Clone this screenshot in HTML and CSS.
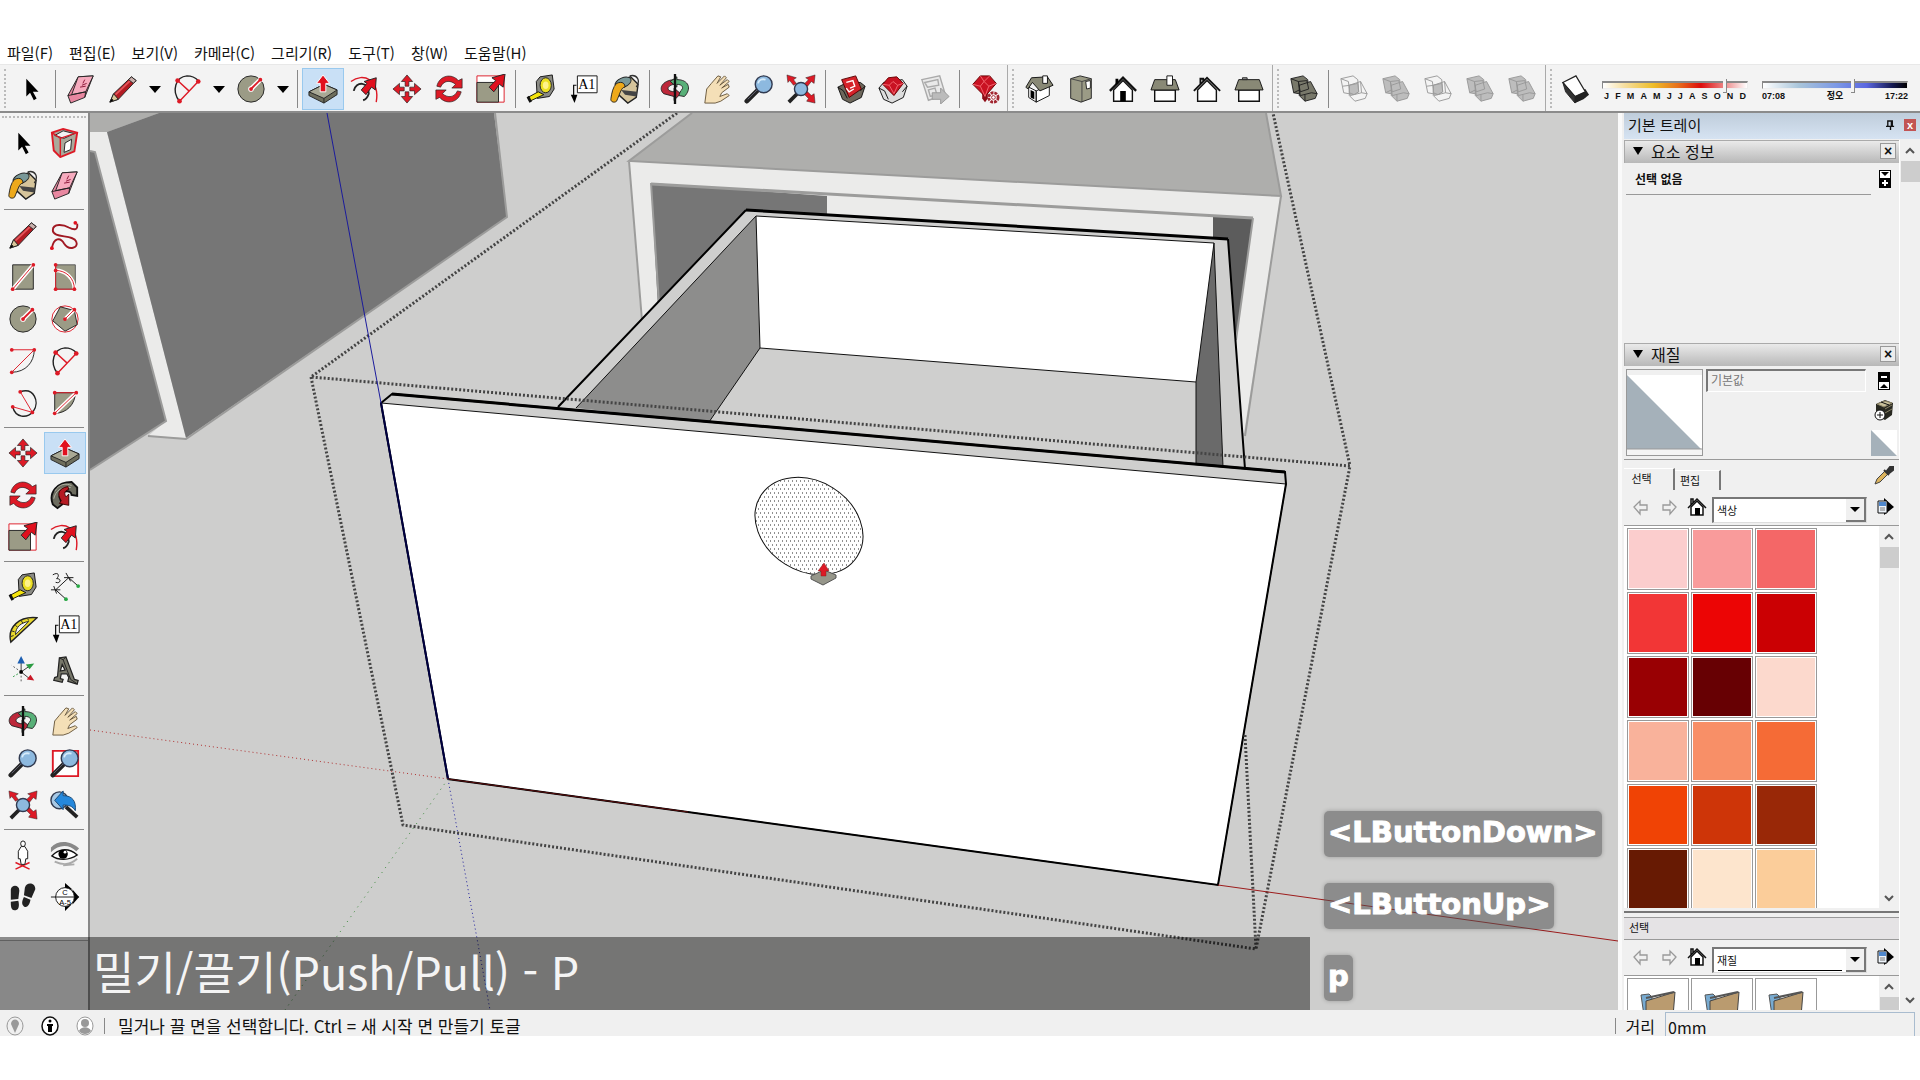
FILE: index.html
```html
<!DOCTYPE html>
<html lang="ko">
<head>
<meta charset="UTF-8">
<meta name="viewport" content="width=device-width, initial-scale=1.0">
<title>SketchUp</title>
<link rel="stylesheet" href="styles.css">
</head>
<body>
<!-- Icon definitions -->
<svg class="defs" width="0" height="0">
    <defs>
        <symbol id="select" viewBox="0 0 32 32"><path d="M11 5v19l4-4 4 8 3-2-4-7h6z"/></symbol>
        <symbol id="eraser" viewBox="0 0 32 32"><path d="M13 3l16-1-9 23-15 6-3-8z" fill="#e887a0" stroke="#222"/><path d="M13 3l16-1-8 17-15 3z" fill="#f6abbe" stroke="#222"/><path d="M2 23l5-1 14-3M21 19l-1 6" fill="none" stroke="#222"/><path d="M20 6l-2 4m4 0l-5 2m4 1l-6 1" stroke="#813" fill="none"/></symbol>
        <symbol id="pencil" viewBox="0 0 32 32"><path d="M2 30l4-9L25 3l5 4L11 27z" fill="#b31b22" stroke="#222"/><path d="M8 22L26 5" stroke="#e2555a" stroke-width="2"/><path d="M2 30l4-9 5 6z" fill="#d9c79b" stroke="#222"/><path d="M2 30l2-4 2 2z"/><path d="M22 6l5 4 3-3-5-4z" fill="#c9b0ac" stroke="#222"/></symbol>
        <symbol id="freehand" viewBox="0 0 32 32"><path d="M2 30c2-11 9-12 13-5 5 8 16 5 13-2C25 15 3 20 3 11c0-8 12-6 17-3 6 3 10 3 9-4" fill="none" stroke="#a01822" stroke-width="2"/><circle cx="2" cy="30" r="2" fill="#e1101e"/><circle cx="27" cy="3" r="2" fill="#e1101e"/></symbol>
        <symbol id="rect" viewBox="0 0 32 32"><path d="M5 3h22v26H5z" fill="#9b9b86" stroke="#222"/><path d="M5 29L27 3" stroke="#fff" stroke-width="4"/><path d="M5 29L27 3" stroke="#dd1a26"/><circle cx="5" cy="29" r="2" fill="#dd1a26"/><circle cx="27" cy="3" r="2" fill="#dd1a26"/></symbol>
        <symbol id="rotrect" viewBox="0 0 32 32"><path d="M6 3h21v26H6z" fill="#9b9b86" stroke="#555"/><path d="M6 9c10 0 20 8 20 20" fill="none" stroke="#fff" stroke-width="4"/><path d="M6 3v26h20C26 17 17 9 6 9" fill="none" stroke="#dd1a26"/><g fill="#dd1a26"><circle cx="6" cy="3" r="2"/><circle cx="6" cy="9" r="2"/><circle cx="6" cy="29" r="2"/><circle cx="26" cy="29" r="2"/></g></symbol>
        <symbol id="circle" viewBox="0 0 32 32"><circle cx="16" cy="16" r="14" fill="#9b9b86" stroke="#222"/><path d="M16 16L26 6" stroke="#fff" stroke-width="5"/><circle cx="16" cy="16" r="3" fill="#fff"/><path d="M16 16L26 6" stroke="#dd1a26" stroke-width="2"/><circle cx="16" cy="16" r="2" fill="#dd1a26"/><circle cx="26" cy="6" r="2" fill="#dd1a26"/></symbol>
        <symbol id="polygon" viewBox="0 0 32 32"><circle cx="16" cy="16" r="14" fill="#fff" stroke="#dd1a26"/><path d="M11 3l15 4 3 15-13 7L3 18z" fill="#9b9b86" stroke="#222"/><path d="M16 16L26 6" stroke="#fff" stroke-width="4"/><path d="M16 16L26 6" stroke="#dd1a26"/><circle cx="16" cy="16" r="2" fill="#dd1a26"/><circle cx="26" cy="6" r="2" fill="#dd1a26"/></symbol>
        <symbol id="arc" viewBox="0 0 32 32"><path d="M28 4c0 13-9 24-24 24" fill="none" stroke="#222"/><path d="M4 4h24L4 28" fill="none" stroke="#dd1a26"/><g fill="#dd1a26"><circle cx="4" cy="4" r="2"/><circle cx="28" cy="4" r="2"/><circle cx="4" cy="28" r="2"/></g></symbol>
        <symbol id="arc2" viewBox="0 0 32 32"><path d="M8 29C-1 18 4 3 16 2c5 0 9 2 12 5" fill="none" stroke="#222" stroke-width="1.5"/><path d="M8 29L28 8M6 7l12 11" stroke="#dd1a26" stroke-width="1.5"/><g fill="#dd1a26"><circle cx="8" cy="29" r="2.5"/><circle cx="28" cy="8" r="2.5"/><circle cx="6" cy="7" r="2.5"/></g></symbol>
        <symbol id="arc3" viewBox="0 0 32 32"><path d="M13 4c15-5 21 11 14 21-7 8-19 7-22-5" fill="none" stroke="#222" stroke-width="1.5"/><path d="M13 4l13 22L5 20" fill="none" stroke="#dd1a26"/><g fill="#dd1a26"><circle cx="13" cy="4" r="2"/><circle cx="26" cy="26" r="2"/><circle cx="5" cy="20" r="2"/></g></symbol>
        <symbol id="pie" viewBox="0 0 32 32"><path d="M5 5h22c0 12-9 22-22 22z" fill="#9b9b86" stroke="#222"/><path d="M5 27L28 5" stroke="#fff" stroke-width="4"/><path d="M5 27L28 5H5" fill="none" stroke="#dd1a26"/><g fill="#dd1a26"><circle cx="5" cy="5" r="2"/><circle cx="28" cy="5" r="2"/><circle cx="5" cy="27" r="2"/></g></symbol>
        <symbol id="pushpull" viewBox="0 0 32 32"><path d="M1 19l16-8 14 6v5l-14 9-16-8z" fill="#6e6e5d" stroke="#222"/><path d="M1 19l16-8 14 6-14 9z" fill="#a9a995" stroke="#222"/><path d="M17 26v5" stroke="#222"/><path d="M13 19V10H9l7-9 7 9h-4v9z" fill="#e1101e" stroke="#fff"/></symbol>
        <symbol id="offset" viewBox="0 0 32 32"><path d="M1 8C14-2 32 6 28 30" fill="none" stroke="#dd1a26" stroke-width="1.5"/><path d="M4 18c2-11 17-10 16 3-1 3-3 6-6 7" fill="none" stroke="#222" stroke-width="2"/><path d="M12 17l6-7-3-2 13-4-1 13-4-3-6 8z" fill="#e1101e" stroke="#222"/></symbol>
        <symbol id="move" viewBox="0 0 32 32"><g fill="#dd1a26" stroke="#222" stroke-width=".7"><path d="M16 1l6 7h-4v5h-4V8h-4z"/><path d="M16 31l6-7h-4v-5h-4v5h-4z"/><path d="M1 16l7-6v4h5v4H8v4z"/><path d="M31 16l-7-6v4h-5v4h5v4z"/></g></symbol>
        <symbol id="rotate" viewBox="0 0 32 32"><g fill="#dd1a26" stroke="#222" stroke-width=".7"><path d="M3 13C6 1 19-1 26 7l4-2v10H19l4-4C17 6 10 7 7 14z"/><path d="M29 19c-3 12-16 14-23 6l-4 2V17h11l-4 4c6 5 13 4 16-3z"/></g></symbol>
        <symbol id="scale" viewBox="0 0 32 32"><path d="M1 2h29v28H1z" fill="#fff" stroke="#dd1a26"/><path d="M1 9h23v21H1z" fill="#9b9b86" stroke="#222"/><path d="M14 14l7-7-4-3 14-4-2 14-4-3-6 8z" fill="#e1101e" stroke="#222"/></symbol>
        <symbol id="follow" viewBox="0 0 32 32"><path d="M3 26C-2 13 8 2 23 2l6 6v9l-6-1c0-6-11-5-13 2l3 8-5 4z" fill="#6c6c5f" stroke="#111" stroke-width="2"/><path d="M5 12c5-8 12-9 18-6M4 20c2-8 7-13 18-12" stroke="#b5b5a6" fill="none"/><path d="M19 7c-10 2-12 8-7 15l-2 3 10 2V15l-3 3c-2-4-2-6 3-8z" fill="#b51a22" stroke="#300"/></symbol>
        <symbol id="tape" viewBox="0 0 32 32"><path d="M11 8l4-5 13-2 2 15-5 8-13 2z" fill="#8b8b85" stroke="#111"/><ellipse cx="21" cy="12" rx="6" ry="8" fill="#ecdf23" stroke="#222"/><ellipse cx="21" cy="12" rx="3" ry="4" fill="#fff28a"/><path d="M13 19l6 3-15 7-2-4z" fill="#f4e40b" stroke="#111"/><path d="M2 24l3 6" stroke="#111" stroke-width="3"/></symbol>
        <symbol id="text" viewBox="0 0 32 32"><path d="M10 2h21v18H10z" fill="#fff" stroke="#111"/><path d="M9 12H6v13" fill="none" stroke="#111" stroke-width="1.3"/><path d="M3 22h7l-3 9z"/><text x="20" y="16" class="glyph">A1</text></symbol>
        <symbol id="paint" viewBox="0 0 32 32"><path d="M8 8l14-5 8 8-2 14-9 6-10-9z" fill="#d5c49b" stroke="#222" stroke-width="1.5"/><path d="M12 17l17 2-1 5-12-2z" fill="#444"/><path d="M21 2c8-2 12 5 7 12" fill="none" stroke="#333" stroke-width="1.4"/><ellipse cx="14" cy="9" rx="9" ry="5" transform="rotate(-22 14 9)" fill="#799898" stroke="#222"/><path d="M7 10c7-3 9 1 9 4-4 0-5 6-9 15-2 2-7 1-6-3 1-6 2-12 6-16z" fill="#eda91b" stroke="#222"/></symbol>
        <symbol id="component" viewBox="0 0 32 32"><path d="M2 5l12-4 15 4-3 20-15 6L4 24z" fill="#aaa99b" stroke="#dd1a26" stroke-width="2"/><path d="M5 8l9-5 12 3-11 5z" fill="#f2f2f2" stroke="#222"/><path d="M16 16l7-4-1 11-7 3z" fill="#fff" stroke="#222"/><path d="M2 5l9 6 18-6M11 11v20" stroke="#dd1a26" stroke-width="1.5" fill="none"/></symbol>
        <symbol id="dim" viewBox="0 0 32 32"><path d="M6 19L20 6M6 19l11 10M20 6l10 9M4 15l3 8M1 19h10M15 6h10M17 1l5 9" stroke="#111" fill="none"/><circle cx="17" cy="29" r="2" fill="#27a743"/><circle cx="30" cy="15" r="2" fill="#27a743"/><path d="M3 3c7-4 7 2 4 4 6 0 4 6-1 4" stroke="#111" fill="none"/></symbol>
        <symbol id="protractor" viewBox="0 0 32 32"><path d="M3 30C-1 14 12 2 31 4z" fill="#e8d82c" stroke="#222" stroke-width="1.5"/><path d="M8 22C8 14 14 9 22 8z" fill="#f4f4f4" stroke="#222"/><path d="M3 24l3-1M4 18l3 1M8 12l2 2m4-7l2 3m5-5l1 2" stroke="#222"/></symbol>
        <symbol id="axes" viewBox="0 0 32 32"><path d="M14 17v12M14 17L4 10" stroke="#555" stroke-dasharray="2 2"/><path d="M14 17L4 23" stroke="#2b9c42" stroke-dasharray="2 2"/><path d="M14 17V6m0 11l10-7M14 17l10 8" stroke="#333"/><path d="M14 0l4 8h-8z" fill="#1c5eb2"/><path d="M28 8l-9 1 4 5z" fill="#2b9c42"/><path d="M28 26l-8-1 4-5z" fill="#c91826"/><circle cx="14" cy="17" r="2"/></symbol>
        <symbol id="text3d" viewBox="0 0 32 32"><path fill-rule="evenodd" d="M10 2l7-1 9 24 4 1-1 4-10-3 1-4-2-4h-6l-1 5 3 1-1 3-9-2 1-3 3-1zM13 9l-2 7 5-1z" fill="#77776a" stroke="#222" stroke-width="1.3"/><path d="M10 2l4 2 8 21 6 4M14 4l3-3" fill="none" stroke="#222"/></symbol>
        <symbol id="orbit" viewBox="0 0 32 32"><path d="M15 6C2 7-2 16 4 21l11 3v4l7-7-7-6v4C5 18 8 12 15 11z" fill="#bd283a" stroke="#222"/><path d="M18 6c13 0 16 10 8 18l-6-1 2-5c4-3 2-7-4-7v3l-7-6 7-5z" fill="#58b078" stroke="#222"/><path d="M16 0v32" stroke="#111" stroke-width="2.5"/></symbol>
        <symbol id="hand" viewBox="0 0 32 32"><path d="M3 31l2-15 5-6L17 2l3 1-4 7 8-8 2 2-7 8 8-6 2 2-8 7 7-4 1 3-8 6-2 4 8-3 2 2-9 6-6 2z" fill="#f4dfb7" stroke="#67563b"/></symbol>
        <symbol id="zoom" viewBox="0 0 32 32"><path d="M3 29l12-12" stroke="#222" stroke-width="5" stroke-linecap="round"/><path d="M4 27l10-10" stroke="#667"/><circle cx="21" cy="11" r="9" fill="#8db9df" stroke="#313a50" stroke-width="1.5"/><path d="M15 10c1-4 4-5 8-4" stroke="#d6ebfa" stroke-width="2" fill="none"/></symbol>
        <symbol id="zoomwin" viewBox="0 0 32 32"><path d="M3 3h27v27H3z" fill="#fff" stroke="#dd1a26" stroke-width="2"/><use href="#zoom"/></symbol>
        <symbol id="extents" viewBox="0 0 32 32"><path d="M3 30l10-10" stroke="#222" stroke-width="4"/><circle cx="16" cy="16" r="7" fill="#8db9df" stroke="#313a50" stroke-width="1.5"/><g fill="#dd1a26" stroke="#222" stroke-width=".5"><path d="M1 1l10 3-3 2 3 4-3 2-4-5-2 2zM31 1L21 4l3 2-4 4 3 3 4-5 3 2zM31 31l-9-2 2-3-4-4 3-3 4 4 3-2z"/></g></symbol>
        <symbol id="previous" viewBox="0 0 32 32"><circle cx="10" cy="11" r="9" fill="#a6c8e5" stroke="#313a50" stroke-width="1.5"/><path d="M17 18l12 11" stroke="#222" stroke-width="4"/><path d="M5 11L14 1v5c10 0 14 6 13 16-3-5-7-6-13-6v5z" fill="#2588dc" stroke="#174673"/></symbol>
        <symbol id="camera" viewBox="0 0 32 32"><path d="M8 31l15-7M8 24l15 7" stroke="#dd1a26" stroke-width="1.5"/><path d="M14 7l-3 5v8h2l1 6h4l1-6h2v-8l-3-5z" fill="#fff" stroke="#111"/><ellipse cx="16" cy="4" rx="2.5" ry="3" fill="#fff" stroke="#111"/></symbol>
        <symbol id="look" viewBox="0 0 32 32"><path d="M1 8C9-1 23 1 31 9l-3 3C20 4 9 5 1 13z" fill="#888"/><path d="M2 17c7-8 18-9 27-1-9 6-20 6-27 1z" fill="#fff" stroke="#111" stroke-width="1.5"/><circle cx="14" cy="15" r="5"/><circle cx="16" cy="13" r="1.5" fill="#fff"/><path d="M5 23c9 4 16 4 24-3M14 27l12-1" stroke="#aaa" stroke-width="2" fill="none"/></symbol>
        <symbol id="walk" viewBox="0 0 32 32"><path d="M3 8C4 2 13 3 12 10l-1 8-8 1zM3 21l8-1c2 8-1 11-4 10-4 0-4-5-4-9zM18 6c2-7 12-5 11 2l-4 9-8-3zM17 16l7 3c-1 6-4 9-7 7-3-2-2-6 0-10z" fill="#222"/></symbol>
        <symbol id="section" viewBox="0 0 32 32"><path d="M16 1l8 7h-8zM31 16l-7 8V8zM16 31l7-7h-7z"/><circle cx="16" cy="16" r="10" fill="#fff" stroke="#111"/><path d="M1 16h30" stroke="#111"/><text x="16" y="14" class="tiny">C</text><text x="16" y="24" class="tiny">A-5</text></symbol>
        <symbol id="warehouse" viewBox="0 0 32 32"><path d="M2 14l6-3 18-2 5 4-4 12-12 6-8-4z" fill="#6d675b" stroke="#111"/><path d="M6 6l15-4 6 14-13 9z" fill="#d52229" stroke="#500"/><path d="M11 9l7-2 2 6-5 2m-4 0l3 4 5-3" fill="none" stroke="#fff" stroke-width="1.5"/><path d="M2 14l6 4 4 8M31 13l-5 5" stroke="#111" fill="none"/></symbol>
        <symbol id="gembox" viewBox="0 0 32 32"><path d="M1 15l5-6 20-3 5 7-4 12-12 6-9-4z" fill="#ddd" stroke="#111"/><path d="M1 15l6 3 4 9M31 13l-5 6" fill="none" stroke="#111"/><path d="M5 11l6-7 9-1 7 7-10 13z" fill="#c91222" stroke="#600"/><path d="M5 11l7 1 4-4 5 4 6-2M12 12l5 9 4-9" fill="none" stroke="#f36a72"/></symbol>
        <symbol id="gem" viewBox="0 0 32 32"><path d="M3 11l8-9h10l7 8-12 14z" fill="#c91222" stroke="#600"/><path d="M3 11l8 2 4-5 5 5 8-3M11 2l4 6 6-6M11 13l5 11 4-11" fill="none" stroke="#f36a72"/></symbol>
        <symbol id="layout" viewBox="0 0 32 32"><path d="M2 6l19-4 6 20-18 6z" fill="#e9e9e9" stroke="#aaa" stroke-width="1.5"/><path d="M5 9l14-3 1 6-12 2zM9 17l7-2 2 7-7 2z" fill="none" stroke="#aaa" stroke-width="1.5"/><path d="M13 20h9v-5l9 9-9 8v-5h-9z" fill="#bbb" stroke="#999"/></symbol>
        <symbol id="gemgear" viewBox="0 0 32 32"><path d="M13 14h6v12l-3 4-3-4z" fill="#8f0e18"/><use href="#gem"/><circle cx="25" cy="25" r="5" fill="#fff" stroke="#a22630" stroke-width="3" stroke-dasharray="3 1"/><circle cx="25" cy="25" r="2" fill="none" stroke="#a22630"/></symbol>
        <symbol id="iso" viewBox="0 0 32 32"><path d="M5 14l8 4v12l-8-5zM13 18l14-6v11l-14 7z" fill="#fff" stroke="#111"/><path d="M2 14L8 4l17-1 6 9-14 6-8-9-5 7z" fill="#898976" stroke="#111"/><path d="M20 2h5v8h-5z" fill="#fff" stroke="#111"/><path d="M7 17l4 2v8l-4-2z"/></symbol>
        <symbol id="top" viewBox="0 0 32 32"><path d="M5 5l10-3 12 3v21l-11 4-11-4z" fill="#9b9b86" stroke="#222"/><path d="M5 5l12 3 10-3M17 8v22" stroke="#444" fill="none"/><path d="M21 8l5-1v8l-4 1z" fill="#fff" stroke="#222"/></symbol>
        <symbol id="front" viewBox="0 0 32 32"><path d="M6 17L16 7l10 10v12H6z" fill="#fff" stroke="#111" stroke-width="1.5"/><path d="M2 18L16 4l14 14" fill="none" stroke="#111" stroke-width="2.5"/><path d="M13 18h6v11h-6zM8 5h3v5l-3 2z"/></symbol>
        <symbol id="right" viewBox="0 0 32 32"><path d="M5 17h22v12H5z" fill="#fff" stroke="#111" stroke-width="1.5"/><path d="M5 6h22l4 11H1z" fill="#898976" stroke="#111"/><path d="M18 2h6v10h-6z" fill="#fff" stroke="#111"/></symbol>
        <symbol id="back" viewBox="0 0 32 32"><path d="M6 17L16 7l10 10v12H6z" fill="#fff" stroke="#111" stroke-width="1.5"/><path d="M2 18L16 4l14 14M9 11V5h3v3" fill="none" stroke="#111" stroke-width="2"/></symbol>
        <symbol id="left" viewBox="0 0 32 32"><path d="M5 17h22v12H5z" fill="#fff" stroke="#111" stroke-width="1.5"/><path d="M5 6h22l4 11H1z" fill="#898976" stroke="#111"/><path d="M9 4h5v2H9z" fill="#999" stroke="#222"/></symbol>
        <symbol id="shell" viewBox="0 0 32 32"><path d="M2 5l13-3 5 4 1 13-5 3-11-2z"/><path d="M11 12l12-4 7 13-2 5-11 3-6-6z"/><path d="M10 8l9-1 2 9-9 3z" fill="none"/><path d="M2 5l8 3 2 15 12-3 6 1M5 20l6-3M17 29v-7" fill="none"/></symbol>
        <symbol id="wire" viewBox="0 0 32 32"><path d="M2 5l13-3 5 4 1 13-5 3-11-2zM11 12l12-4 7 13-2 5-11 3-6-6zM2 5l8 3 2 15 12-3 6 1M4 13l16-2M24 20l-1-12" fill="none"/><path d="M11 12l9-2 1 9-5 3-5-2z"/></symbol>
        <symbol id="shadow" viewBox="0 0 32 32"><path d="M17 19l10-3 4 6-6 5-9 4z" fill="#222"/><path d="M3 9l14-7 10 17-11 5z" fill="#fff" stroke="#222" stroke-width="1.3"/><path d="M3 9l13 15v7L6 19z" fill="#333" stroke="#222"/><path d="M16 24l11-5v6l-11 6z" fill="#222"/></symbol>
        <symbol id="home" viewBox="0 0 20 20"><path d="M4 10l6-6 6 6v8H4z" fill="#fff" stroke="#111" stroke-width="1.5"/><path d="M1 11L10 2l9 9M4 8V2h2v4" fill="none" stroke="#111" stroke-width="1.5"/><path d="M8 11h5v7H8z"/></symbol>
        <symbol id="prev" viewBox="0 0 20 20"><path d="M3 10l6-6v4h7v5H9v4z" fill="none" stroke="#999" stroke-width="1.3"/></symbol>
        <symbol id="next" viewBox="0 0 20 20"><path d="M17 10l-6-6v4H4v5h7v4z" fill="none" stroke="#999" stroke-width="1.3"/></symbol>
        <symbol id="details" viewBox="0 0 20 20"><path d="M9 1l10 9-10 8z"/><path d="M3 4h9v12H3z" fill="#eef4fb" stroke="#111"/><path d="M4 5h7v4H4z" fill="#4f87cc"/><path d="M5 11h5m-5 2h5" stroke="#777"/></symbol>
        <symbol id="folder" viewBox="0 0 40 40"><path d="M3 6l8-1 3 3v32H8z" fill="#78abd1" stroke="#555"/><path d="M8 12l29-9-3 37H8z" fill="#ba9b6f" stroke="#444"/><path d="M8 9l28-6" stroke="#555" stroke-width="2"/></symbol>
        <symbol id="up" viewBox="0 0 12 12"><path d="M2 8l4-4 4 4" fill="none" stroke="#555" stroke-width="2"/></symbol>
        <symbol id="down" viewBox="0 0 12 12"><path d="M2 4l4 4 4-4" fill="none" stroke="#555" stroke-width="2"/></symbol>
    </defs>
</svg>

<nav class="menu">
    <button>파일(F)</button>
    <button>편집(E)</button>
    <button>보기(V)</button>
    <button>카메라(C)</button>
    <button>그리기(R)</button>
    <button>도구(T)</button>
    <button>창(W)</button>
    <button>도움말(H)</button>
</nav>

<div class="toolbars">
    <div class="bar bar-main">
        <button class="tool"><svg><use href="#select"/></svg></button>
        <i class="sep"></i>
        <button class="tool"><svg><use href="#eraser"/></svg></button>
        <button class="tool"><svg><use href="#pencil"/></svg></button><button class="more"></button>
        <button class="tool"><svg><use href="#arc2"/></svg></button><button class="more"></button>
        <button class="tool"><svg><use href="#circle"/></svg></button><button class="more"></button>
        <i class="sep"></i>
        <button class="tool active"><svg><use href="#pushpull"/></svg></button>
        <button class="tool"><svg><use href="#offset"/></svg></button>
        <button class="tool"><svg><use href="#move"/></svg></button>
        <button class="tool"><svg><use href="#rotate"/></svg></button>
        <button class="tool"><svg><use href="#scale"/></svg></button>
        <i class="sep"></i>
        <button class="tool"><svg><use href="#tape"/></svg></button>
        <button class="tool"><svg><use href="#text"/></svg></button>
        <button class="tool"><svg><use href="#paint"/></svg></button>
        <i class="sep"></i>
        <button class="tool"><svg><use href="#orbit"/></svg></button>
        <button class="tool"><svg><use href="#hand"/></svg></button>
        <button class="tool"><svg><use href="#zoom"/></svg></button>
        <button class="tool"><svg><use href="#extents"/></svg></button>
        <i class="sep"></i>
        <button class="tool"><svg><use href="#warehouse"/></svg></button>
        <button class="tool"><svg><use href="#gembox"/></svg></button>
        <button class="tool"><svg><use href="#layout"/></svg></button>
        <i class="sep"></i>
        <button class="tool"><svg><use href="#gemgear"/></svg></button>
    </div>
    <div class="bar">
        <button class="tool"><svg><use href="#iso"/></svg></button>
        <button class="tool"><svg><use href="#top"/></svg></button>
        <button class="tool"><svg><use href="#front"/></svg></button>
        <button class="tool"><svg><use href="#right"/></svg></button>
        <button class="tool"><svg><use href="#back"/></svg></button>
        <button class="tool"><svg><use href="#left"/></svg></button>
    </div>
    <div class="bar">
        <button class="tool solid"><svg><use href="#shell"/></svg></button>
        <i class="sep"></i>
        <button class="tool solid off"><svg><use href="#wire"/></svg></button>
        <button class="tool solid off"><svg><use href="#shell"/></svg></button>
        <button class="tool solid off"><svg><use href="#wire"/></svg></button>
        <button class="tool solid off"><svg><use href="#shell"/></svg></button>
        <button class="tool solid off"><svg><use href="#shell"/></svg></button>
    </div>
    <div class="bar bar-shadow">
        <button class="tool"><svg><use href="#shadow"/></svg></button>
        <div class="slider">
            <input class="months" type="range" min="0" max="100" value="86" aria-label="월">
            <div class="ticks"><span>J</span><span>F</span><span>M</span><span>A</span><span>M</span><span>J</span><span>J</span><span>A</span><span>S</span><span>O</span><span>N</span><span>D</span></div>
        </div>
        <div class="slider">
            <input class="hours" type="range" min="0" max="100" value="63" aria-label="시간">
            <div class="ticks"><span>07:08</span><span>정오</span><span>17:22</span></div>
        </div>
    </div>
</div>

<main class="main">
    <aside class="side">
        <div class="palette">
            <div class="group">
                <button class="tool"><svg><use href="#select"/></svg></button>
                <button class="tool"><svg><use href="#component"/></svg></button>
                <button class="tool"><svg><use href="#paint"/></svg></button>
                <button class="tool"><svg><use href="#eraser"/></svg></button>
            </div>
            <div class="group">
                <button class="tool"><svg><use href="#pencil"/></svg></button>
                <button class="tool"><svg><use href="#freehand"/></svg></button>
                <button class="tool"><svg><use href="#rect"/></svg></button>
                <button class="tool"><svg><use href="#rotrect"/></svg></button>
                <button class="tool"><svg><use href="#circle"/></svg></button>
                <button class="tool"><svg><use href="#polygon"/></svg></button>
                <button class="tool"><svg><use href="#arc"/></svg></button>
                <button class="tool"><svg><use href="#arc2"/></svg></button>
                <button class="tool"><svg><use href="#arc3"/></svg></button>
                <button class="tool"><svg><use href="#pie"/></svg></button>
            </div>
            <div class="group">
                <button class="tool"><svg><use href="#move"/></svg></button>
                <button class="tool active"><svg><use href="#pushpull"/></svg></button>
                <button class="tool"><svg><use href="#rotate"/></svg></button>
                <button class="tool"><svg><use href="#follow"/></svg></button>
                <button class="tool"><svg><use href="#scale"/></svg></button>
                <button class="tool"><svg><use href="#offset"/></svg></button>
            </div>
            <div class="group">
                <button class="tool"><svg><use href="#tape"/></svg></button>
                <button class="tool"><svg><use href="#dim"/></svg></button>
                <button class="tool"><svg><use href="#protractor"/></svg></button>
                <button class="tool"><svg><use href="#text"/></svg></button>
                <button class="tool"><svg><use href="#axes"/></svg></button>
                <button class="tool"><svg><use href="#text3d"/></svg></button>
            </div>
            <div class="group">
                <button class="tool"><svg><use href="#orbit"/></svg></button>
                <button class="tool"><svg><use href="#hand"/></svg></button>
                <button class="tool"><svg><use href="#zoom"/></svg></button>
                <button class="tool"><svg><use href="#zoomwin"/></svg></button>
                <button class="tool"><svg><use href="#extents"/></svg></button>
                <button class="tool"><svg><use href="#previous"/></svg></button>
            </div>
            <div class="group">
                <button class="tool"><svg><use href="#camera"/></svg></button>
                <button class="tool"><svg><use href="#look"/></svg></button>
                <button class="tool"><svg><use href="#walk"/></svg></button>
                <button class="tool"><svg><use href="#section"/></svg></button>
            </div>
        </div>
    </aside>

    <section class="viewport">
        <svg class="scene" viewBox="90 113 1528 897" preserveAspectRatio="xMinYMin slice">
            <defs>
                <pattern id="dots" width="4" height="8" patternUnits="userSpaceOnUse" patternTransform="rotate(-32 809 526)"><path d="M0 1h1M2 5h1" stroke="#222"/></pattern>
            </defs>
            <!-- cabinet on the left -->
            <path d="M90 113h69l-52 19H90z" fill="#aeaeac"/>
            <path d="M90 132h17l79 306-38-2 18-15L95 152l-5-1z" fill="#ebebea"/>
            <path d="M107 132l52-19h335l13 104L186 438z" fill="#767676"/>
            <path d="M90 151l5 1 71 269L90 470z" fill="#767676"/>
            <path d="M495 113l12 104-321 222-38-3M90 151l5 1 71 269-76 49" fill="none" stroke="#9c9c9b" stroke-width="2"/>
            <!-- cabinet behind the drawer -->
            <path d="M692 113h574l15 83-652-35z" fill="#aeaeac"/>
            <path d="M629 161l652 35-37 237-602-100z" fill="#ebebea"/>
            <path d="M651 183l176 13v130H659z" fill="#767676"/>
            <path d="M1213 216l40 2-17 122-23-40z" fill="#5c5c5c"/>
            <path d="M692 113l-63 48 652 35-15-83M629 161l13 160M1281 196l-36 240" fill="none" stroke="#9c9c9b" stroke-width="2"/>
            <path d="M651 184l602 34" fill="none" stroke="#9c9c9b" stroke-width="3"/>
            <path d="M651 183l8 120M1253 218l-17 122" fill="none" stroke="#9c9c9b" stroke-width="2"/>
            <!-- floor showing past the drawer side -->
            <path d="M643 320l-85 87 80 10z" fill="#cececd"/>
            <!-- drawer box -->
            <path d="M746 210l482 29 17 230-687-62z" fill="#cfcfce"/>
            <path d="M756 216l458 27-18 139-436-34z" fill="#fff"/>
            <path d="M756 216l4 132-51 74-133-14z" fill="#8d8d8c"/>
            <path d="M1214 243l-18 139v84l27 2z" fill="#6a6a6a"/>
            <path d="M576 408l180-192 458 27-18 139-436-34-4-132M760 348l-51 74M1196 382v84M1214 243l9 224" fill="none" stroke="#111"/>
            <path d="M558 407l188-197M1228 239l17 230" fill="none" stroke="#000" stroke-width="2"/>
            <path d="M746 210l482 29" stroke="#000" stroke-width="3"/>
            <!-- drawer front -->
            <path d="M381 403l11-9 893 78 1 12z" fill="#cfcfce"/>
            <path d="M381 403l905 81-68 401-770-106z" fill="#fff" stroke="#111"/>
            <path d="M381 403l11-9 893 78 1 12-68 401-770-106z" fill="none" stroke="#000" stroke-width="2"/>
            <path d="M392 394l893 78" stroke="#000" stroke-width="3"/>
            <path d="M381 403l67 376" stroke="#000040" stroke-width="2"/>
            <ellipse cx="809" cy="526" rx="57" ry="45" transform="rotate(32 809 526)" fill="url(#dots)" stroke="#111"/>
            <!-- bounding box -->
            <path d="M677 113L311 377l1039 89-77-353M311 377l92 448 853 124 94-483M1245 735l11 214" fill="none" stroke="#444" stroke-width="3" stroke-dasharray="2 2"/>
            <!-- axes -->
            <path d="M327 113l54 290" stroke="#1b1b9c"/>
            <path d="M1218 885l400 56" stroke="#9c1c1c"/>
            <path d="M448 779l240 33" stroke="#5a1010"/>
            <path d="M90 730l358 49" stroke="#b03030" stroke-dasharray="1 3"/>
            <path d="M448 779l42 231" stroke="#1b1b9c" stroke-dasharray="1 3"/>
            <path d="M448 779L285 1010" stroke="#3c8a3c" stroke-dasharray="1 5"/>
            <!-- cursor -->
            <path d="M811 576l13-6 12 5v3l-13 7-12-6z" fill="#96968a" stroke="#555"/>
            <path d="M821 576v-5h-3l6-8 5 8h-3v5z" fill="#dd1a26" stroke="#822" stroke-width=".5"/>
        </svg>
    </section>

    <aside class="tray">
        <header class="tray-title"><span>기본 트레이</span>
            <svg class="pin" viewBox="0 0 10 12"><path d="M2 7V1h5v6M0 7h9M5 7v4M6 1v6" fill="none" stroke="#111" stroke-width="1.5"/></svg>
            <button class="close-tray">x</button>
        </header>
        <div class="tray-body">
            <div class="panels">
                <div class="panel-head"><i class="tri"></i><span>요소 정보</span><button>×</button></div>
                <div class="entity">
                    <b>선택 없음</b>
                    <svg viewBox="0 0 12 18"><path d="M0 0h12v18H0z"/><path d="M1 1h10v7H1z" fill="#fff"/><path d="M2 2h8L6 6z"/><path d="M6 10v6M3 13h6" stroke="#fff" stroke-width="2"/></svg>
                </div>
                <div class="panel-head"><i class="tri"></i><span>재질</span><button>×</button></div>
                <div class="material">
                    <svg class="preview" viewBox="0 0 76 86"><path d="M0 0h76v86H0z" fill="#fff"/><path d="M0 0h76v5H0z" fill="#f0f0f0"/><path d="M0 80h76v6H0z" fill="#f4f4f4"/><path d="M0 5l75 75H0z" fill="#a5b1ba"/><path d="M0 80h76" stroke="#999"/></svg>
                    <input class="name" type="text" value="기본값" disabled aria-label="재질 이름">
                    <div class="material-icons">
                        <svg viewBox="0 0 12 18" width="12" height="18"><path d="M0 0h12v18H0z"/><path d="M1 10h10v7H1z" fill="#fff"/><path d="M2 16h8l-4-4z"/><path d="M3 5h6" stroke="#fff" stroke-width="2"/></svg>
                        <svg viewBox="0 0 22 22" width="22" height="22"><path d="M3 5l9-4 8 3-1 12-7 5-9-4z" fill="#282820"/><path d="M4 5l8-3 7 2-8 4zM12 10l7-4m-7 8l7-4" fill="#c9c09a" stroke="#888064"/><path d="M8 3l8 3" stroke="#111"/><circle cx="7" cy="16" r="5" fill="#fff" stroke="#111"/><path d="M4 16h6m-3-3v6" stroke="#111"/></svg>
                        <svg viewBox="0 0 26 26" width="26" height="26"><path d="M0 0h26v26H0z" fill="#fff"/><path d="M0 0l26 26H0z" fill="#a5b1ba"/></svg>
                    </div>
                </div>
                <div class="tabs">
                    <button class="tab on">선택</button><button class="tab">편집</button>
                    <svg class="picker" viewBox="0 0 22 22"><path d="M2 20l2-5 8-8 3 3-8 8z" fill="#dbb35e" stroke="#444"/><path d="M11 6l5 5M13 8l4-5 3 0 0 3-5 4z" fill="#333" stroke="#333" stroke-width="2"/></svg>
                </div>
                <div class="browse">
                    <button><svg><use href="#prev"/></svg></button>
                    <button><svg><use href="#next"/></svg></button>
                    <button><svg><use href="#home"/></svg></button>
                    <div class="combo"><select aria-label="색상 목록"><option>색상</option></select><i></i></div>
                    <button><svg><use href="#details"/></svg></button>
                </div>
                <div class="list colors">
                    <div class="swatches" id="swatches"></div>
                    <div class="scroll"><svg><use href="#up"/></svg><i></i><svg class="end"><use href="#down"/></svg></div>
                </div>
                <div class="splitter"></div>
                <div class="subhead">선택</div>
                <div class="browse">
                    <button><svg><use href="#prev"/></svg></button>
                    <button><svg><use href="#next"/></svg></button>
                    <button><svg><use href="#home"/></svg></button>
                    <div class="combo focus"><select aria-label="재질 목록"><option>재질</option></select><i></i></div>
                    <button><svg><use href="#details"/></svg></button>
                </div>
                <div class="list folders">
                    <div class="swatches">
                        <button class="swatch folder"><svg><use href="#folder"/></svg></button>
                        <button class="swatch folder"><svg><use href="#folder"/></svg></button>
                        <button class="swatch folder"><svg><use href="#folder"/></svg></button>
                    </div>
                    <div class="scroll"><svg><use href="#up"/></svg><i></i></div>
                </div>
            </div>
            <div class="scroll outer"><svg><use href="#up"/></svg><i></i><svg class="end"><use href="#down"/></svg></div>
        </div>
    </aside>

    <div class="caption">밀기/끌기(Push/Pull) - P</div>
    <div class="keys">
        <kbd>&lt;LButtonDown&gt;</kbd>
        <kbd>&lt;LButtonUp&gt;</kbd>
        <kbd>p</kbd>
    </div>
</main>

<footer class="status">
    <svg viewBox="0 0 18 20"><ellipse cx="9" cy="10" rx="8" ry="9" fill="none" stroke="#999"/><path d="M9 17L5 8c0-6 8-6 8 0z" fill="#999"/></svg>
    <svg viewBox="0 0 18 20"><ellipse cx="9" cy="10" rx="8" ry="9" fill="#fff" stroke="#111" stroke-width="1.5"/><circle cx="9" cy="5" r="1.5"/><path d="M6 8h6v2h-1v6H7v-6H6z"/></svg>
    <svg viewBox="0 0 18 20"><ellipse cx="9" cy="10" rx="8" ry="9" fill="#fff" stroke="#999"/><circle cx="9" cy="7" r="4" fill="#999"/><path d="M3 15c2-5 10-5 12 0-3 4-9 4-12 0z" fill="#999"/></svg>
    <span class="hint">밀거나 끌 면을 선택합니다. Ctrl = 새 시작 면 만들기 토글</span>
    <label class="distance" for="distance">거리</label>
    <input id="distance" type="text" value="0mm">
</footer>

<script>
    var colors = [
        '#fbcdcd', '#f99b9b', '#f46767',
        '#f23636', '#ec0505', '#cb0003',
        '#990003', '#670003', '#fcd9cd',
        '#f9b29b', '#f88f67', '#f56b36',
        '#f04305', '#ce3508', '#992807',
        '#671a03', '#fde5cd', '#fbcd9a'
    ];
    var swatches = document.getElementById('swatches');

    colors.forEach(function(color) {
        swatches.innerHTML += '<button class="swatch"><span style="background:' + color + '"></span></button>';
    });
</script>
</body>
</html>
```
FILE: styles.css
```css
* {
    box-sizing: border-box;
}

body {
    margin: 0;
    padding: 40px 0 44px;
    height: 100vh;
    display: flex;
    flex-direction: column;
    overflow: hidden;
    background: #fff;
    color: #111;
    font-family: "Noto Sans CJK KR", sans-serif;
    font-size: 15px;
}

button,
input,
select {
    font: inherit;
    color: inherit;
    margin: 0;
    padding: 0;
    border: 0;
    border-radius: 0;
    background: none;
}

svg {
    display: block;
}

.defs {
    position: absolute;
}

.glyph {
    font: 15px "Liberation Serif", serif;
    text-anchor: middle;
}

.tiny {
    font: 8px "Liberation Sans", sans-serif;
    text-anchor: middle;
}

/* Menu */
.menu {
    display: flex;
    gap: 16px;
    height: 24px;
    padding: 0 7px;
}

.menu button {
    line-height: 26px;
    height: 26px;
}

/* Top toolbars */
.toolbars {
    display: flex;
    height: 49px;
    background: #f3f3f3;
    border-top: 1px solid #e8e8e8;
    border-bottom: 2px solid #8b8b8b;
}

.bar {
    display: flex;
    align-items: center;
    padding: 2px 2px 0 10px;
    position: relative;
    border-right: 1px solid #aaa;
}

.bar::before {
    content: "";
    position: absolute;
    left: 4px;
    top: 4px;
    bottom: 3px;
    border-left: 2px dotted #bbb;
}

.bar-main {
    padding-right: 1px;
}

.bar-shadow {
    flex: 1;
    padding-left: 8px;
    border-right: 0;
}

.tool {
    width: 42px;
    height: 42px;
    display: flex;
    align-items: center;
    justify-content: center;
    border: 1px solid transparent;
    flex: none;
}

.tool svg {
    width: 30px;
    height: 30px;
}

.tool.active {
    background: #c9e0f6;
    border-color: #99c9ee;
}

.sep {
    width: 1px;
    height: 38px;
    margin: 0 4px 0 3px;
    background: #888;
}

.more {
    width: 22px;
    height: 42px;
    display: flex;
    justify-content: center;
    align-items: center;
}

.more::before,
.combo i::before,
.tri {
    content: "";
    border: 6px solid transparent;
    border-top: 7px solid #000;
    border-bottom: 0;
}

.solid {
    fill: #78786a;
    stroke: #222;
}

.solid.off {
    fill: #bdbdbd;
    stroke: #999;
}

.slider {
    width: 146px;
    margin-left: 6px;
}

.slider + .slider {
    margin-left: 14px;
}

.slider input {
    appearance: none;
    display: block;
    width: 100%;
    height: 8px;
    margin-top: 6px;
    border: 1px solid #eee;
    border-top: 2px solid #888;
    border-left: 1px solid #888;
}

.slider input::-webkit-slider-thumb {
    appearance: none;
    width: 4px;
    height: 14px;
    background: #f3f3f3;
    border-right: 1px solid #888;
    border-bottom: 1px solid #888;
}

.months {
    background: linear-gradient(90deg, #fff, #f6dfa0 15%, #eebd28 35%, #e8701c 52%, #dd0c0c 68%, #f0a3a3 88%, #fff);
}

.hours {
    background: linear-gradient(90deg, #fff, #a9c5da 25%, #7b97e6 52%, #5a66e0 72%, #141850 90%, #000);
}

.ticks {
    display: flex;
    justify-content: space-between;
    padding: 0 2px;
    font: bold 9px/14px "Liberation Sans", "Noto Sans CJK KR", sans-serif;
}

.hours + .ticks {
    padding: 0;
}

/* Work area */
.main {
    flex: 1;
    min-height: 0;
    display: flex;
    position: relative;
}

.side {
    width: 90px;
    background: #f0f0f0;
    border-right: 2px solid #888;
    overflow: hidden;
}

.palette {
    background: #f4f4f4;
    padding: 9px 0 22px 2px;
    border-bottom: 1px solid #aaa;
    position: relative;
}

.palette::before {
    content: "";
    position: absolute;
    left: 2px;
    right: 2px;
    top: 3px;
    border-top: 2px dotted #bbb;
}

.group {
    display: flex;
    flex-wrap: wrap;
    margin: 0 2px 0 0;
    position: relative;
}

.group + .group {
    padding-top: 8px;
}

.group + .group::before {
    content: "";
    position: absolute;
    left: 2px;
    right: 2px;
    top: 3px;
    border-top: 1px solid #888;
}

.viewport {
    flex: 1;
    min-width: 0;
    background: #cececd;
    overflow: hidden;
}

.scene {
    width: 100%;
    height: 100%;
}

.caption {
    position: absolute;
    left: 0;
    right: 610px;
    bottom: 0;
    height: 73px;
    padding-left: 93px;
    background: rgba(0, 0, 0, 0.43);
    color: #f4f4f4;
    font-size: 45px;
    font-weight: 400;
    line-height: 67px;
    white-space: nowrap;
}

.keys {
    position: absolute;
    right: 302px;
    bottom: 9px;
    width: 294px;
    display: flex;
    flex-direction: column;
    align-items: flex-start;
    gap: 26px;
}

kbd {
    height: 46px;
    padding: 0 4px;
    border-radius: 5px;
    background: rgba(80, 80, 80, 0.52);
    box-shadow: 0 0 4px rgba(0, 0, 0, 0.25);
    color: #fff;
    font: bold 29px/42px "DejaVu Sans", sans-serif;
    -webkit-text-stroke: 1px #fff;
}

/* Tray */
.tray {
    width: 302px;
    display: flex;
    flex-direction: column;
    background: #f0f0f0;
    border-left: 4px solid #fafafa;
    padding-left: 2px;
}

.tray-title {
    display: flex;
    align-items: center;
    height: 26px;
    padding: 0 4px 2px;
    background: linear-gradient(#bfcddb, #d6e3f2);
    line-height: 22px;
}

.pin {
    width: 9px;
    height: 11px;
    margin: 0 9px 0 auto;
}

.close-tray {
    width: 12px;
    height: 12px;
    background: #c25454;
    color: #fff;
    font: bold 11px/10px "Liberation Sans", sans-serif;
}

.tray-body {
    flex: 1;
    min-height: 0;
    display: flex;
    padding-top: 1px;
}

.panels {
    flex: 1;
    min-width: 0;
    display: flex;
    flex-direction: column;
    border-right: 1px solid #fff;
}

.panel-head {
    display: flex;
    align-items: center;
    flex: none;
    height: 23px;
    padding: 0 3px 2px 8px;
    border-top: 1px solid #aaa;
    border-left: 1px solid #aaa;
    background: linear-gradient(#eaeaea, #b8b8b8);
    font-size: 16px;
    line-height: 20px;
}

.tri {
    border-width: 5px;
    border-top-width: 8px;
    margin-right: 8px;
}

.panel-head button {
    width: 16px;
    height: 16px;
    margin-left: auto;
    border: 1px solid #999;
    background: #ececec;
    font: bold 14px/12px "Liberation Sans", sans-serif;
}

.entity {
    display: flex;
    justify-content: space-between;
    height: 180px;
    flex: none;
    padding: 7px 8px 0 11px;
    font-size: 12px;
    line-height: 18px;
    position: relative;
}

.entity::after {
    content: "";
    position: absolute;
    left: 2px;
    right: 28px;
    top: 31px;
    border-top: 1px solid #999;
}

.entity svg {
    width: 12px;
    height: 18px;
}

.material {
    display: flex;
    align-items: flex-start;
    flex: none;
    height: 94px;
    padding: 3px 2px 0;
    border-bottom: 1px solid #999;
}

.preview {
    width: 77px;
    height: 87px;
    border: 1px solid #999;
}

.name {
    flex: 1;
    min-width: 0;
    height: 23px;
    margin: 0 5px 0 3px;
    padding: 0 0 3px 3px;
    border: 1px solid #fff;
    border-top: 2px solid #777;
    border-left: 2px solid #777;
    background: #f0f0f0;
    color: #777;
    font-size: 12px;
}

.material-icons {
    width: 26px;
    display: flex;
    flex-direction: column;
    align-items: center;
    gap: 9px;
    padding-top: 3px;
}

.tabs {
    display: flex;
    align-items: flex-end;
    flex: none;
    height: 30px;
    font-size: 11px;
}

.tab {
    width: 46px;
    height: 20px;
    padding: 0 14px 2px 0;
    border-top: 1px solid #fff;
    border-right: 2px solid #777;
    line-height: 16px;
}

.tab.on {
    width: 51px;
    height: 22px;
    padding-bottom: 4px;
}

.picker {
    width: 22px;
    height: 22px;
    margin: 0 4px 4px auto;
}

.browse {
    display: flex;
    align-items: center;
    flex: none;
    height: 36px;
    padding: 0 4px 2px 7px;
    border-bottom: 1px solid #999;
}

.browse button {
    margin-right: 8px;
}

.browse button svg {
    width: 20px;
    height: 20px;
}

.browse button:last-child {
    margin: 0 0 0 8px;
}

.combo {
    flex: 1;
    height: 26px;
    margin-left: -3px;
    position: relative;
    align-self: flex-end;
    background: #fff;
    border: 1px solid #ddd;
    border-top: 2px solid #777;
    border-left: 2px solid #777;
}

.combo select {
    appearance: none;
    display: block;
    width: 100%;
    height: 100%;
    padding: 0 0 2px 3px;
    font-size: 11px;
    outline: 0;
}

.combo.focus::after {
    content: "";
    position: absolute;
    left: 4px;
    right: 24px;
    bottom: 1px;
    border-bottom: 1px solid #000;
}

.combo i {
    position: absolute;
    right: 0;
    top: 0;
    bottom: 0;
    width: 20px;
    display: flex;
    align-items: center;
    justify-content: center;
    background: #f0f0f0;
    border-right: 2px solid #777;
    border-bottom: 2px solid #777;
    pointer-events: none;
}

.combo i::before {
    border-width: 5px 5px 0;
}

.list {
    display: flex;
    overflow: hidden;
    background: #fff;
}

.colors {
    flex: 1;
    min-height: 0;
}

.folders {
    flex: none;
    height: 34px;
}

.swatches {
    flex: 1;
    display: grid;
    grid-template-columns: 62px 62px 62px;
    grid-auto-rows: 62px;
    align-content: start;
    gap: 2px;
    padding: 2px 3px;
}

.swatch {
    border: 1px solid #999;
    padding: 1px;
    background: #fff;
}

.swatch span {
    display: block;
    height: 100%;
}

.folder {
    display: flex;
    justify-content: center;
    padding-top: 10px;
}

.folder svg {
    width: 40px;
    height: 40px;
}

.scroll {
    width: 20px;
    display: flex;
    flex-direction: column;
    align-items: center;
    background: #f0f0f0;
}

.scroll svg {
    width: 12px;
    height: 12px;
    margin: 5px 0 4px;
    flex: none;
}

.scroll i {
    width: 19px;
    height: 21px;
    background: #cdcdcd;
}

.scroll .end {
    margin-top: auto;
}

.splitter {
    flex: none;
    height: 7px;
    border-top: 2px solid #777;
    border-bottom: 1px solid #999;
    margin-top: 3px;
}

.subhead {
    flex: none;
    height: 22px;
    padding-left: 5px;
    border-bottom: 1px solid #999;
    background: #e5e3e5;
    font-size: 11px;
    line-height: 19px;
}

/* Status bar */
.status {
    display: flex;
    align-items: center;
    flex: none;
    height: 26px;
    padding: 6px 0 0 6px;
    background: #f0f0f0;
}

.status svg {
    width: 18px;
    height: 20px;
    margin-right: 17px;
}

.hint {
    flex: 1;
    padding-left: 13px;
    margin-left: -7px;
    border-left: 1px solid #888;
    font-size: 17px;
    line-height: 16px;
}

.distance {
    padding: 0 10px;
    border-left: 1px solid #888;
    font-size: 16px;
    line-height: 16px;
}

#distance {
    width: 250px;
    height: 24px;
    align-self: flex-end;
    padding: 4px 0 0 2px;
    margin-right: 5px;
    border: 1px solid #a9bccf;
    border-bottom: 0;
    font-size: 16px;
    line-height: 18px;
}
```
